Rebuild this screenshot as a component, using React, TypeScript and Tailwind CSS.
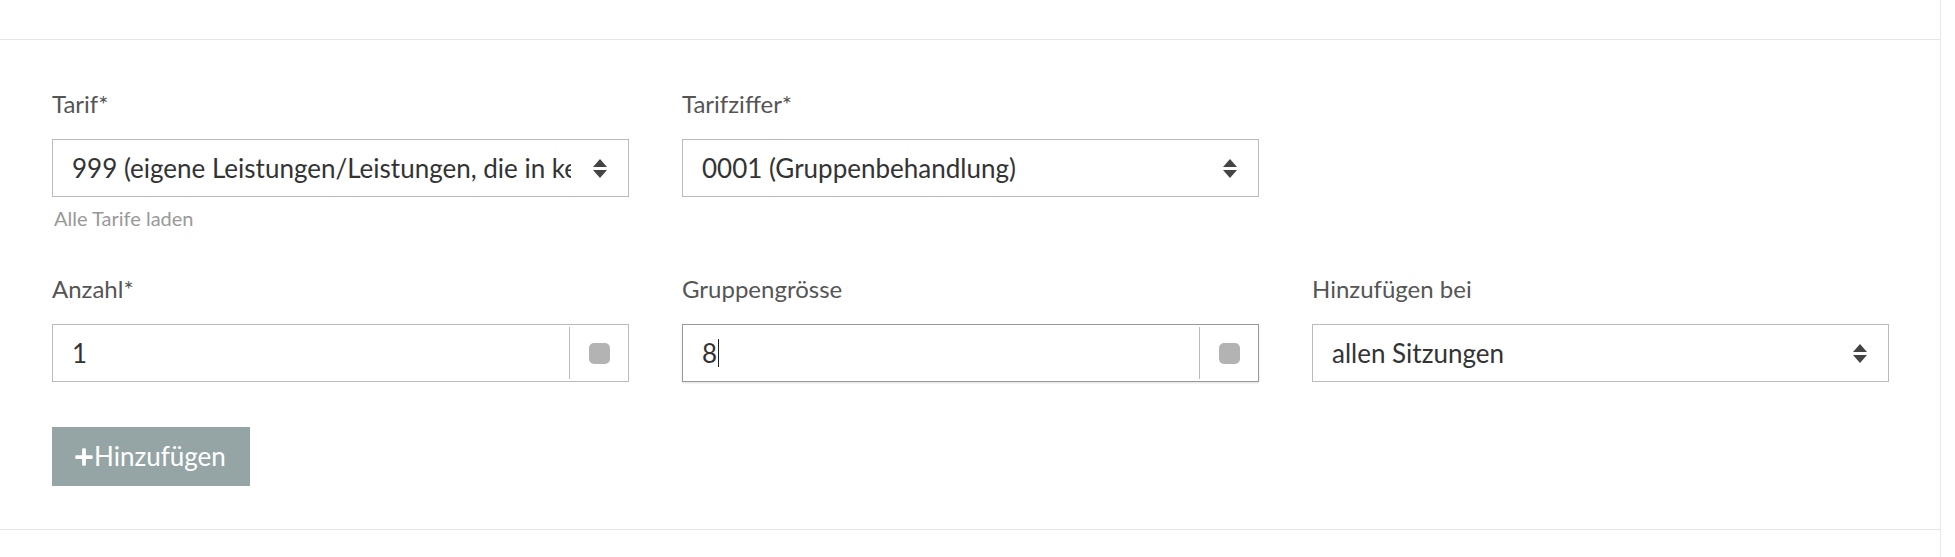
import React from 'react';
import { FaPlus } from 'react-icons/fa';

const font = { fontFamily: 'Lato, "Noto Sans", sans-serif' };

const SelectArrows: React.FC = () => (
    <svg width="14" height="19" viewBox="0 0 14 19" className="shrink-0">
        <path d="M7 0 L14 8 L0 8 Z" fill="#444" />
        <path d="M0 11 L14 11 L7 19 Z" fill="#444" />
    </svg>
);

const FakeSelect: React.FC<{ value: string }> = ({ value }) => (
    <div className="flex h-[58px] w-full items-center border border-[#bbbbbb] bg-white pl-[19px] pr-[21px]">
        <div className="mr-[22px] min-w-0 flex-1 overflow-hidden whitespace-nowrap text-[26px] text-[#333]">
            {value}
        </div>
        <SelectArrows />
    </div>
);

const NumberInput: React.FC<{ value: string; focused?: boolean }> = ({ value, focused }) => (
    <div
        className={
            'flex h-[58px] w-full border bg-white ' +
            (focused ? 'border-[#999999] shadow-[0_1px_2px_rgba(0,0,0,0.12)]' : 'border-[#bbbbbb]')
        }
    >
        <div className="flex flex-1 items-center pl-[19px] text-[26px] text-[#333]">
            <span>{value}</span>
            {focused && <span className="ml-px h-[28px] w-px bg-[#222]" />}
        </div>
        <div className="my-[2px] flex w-[59px] items-center justify-center border-l border-[#bbbbbb]">
            <span className="h-[21px] w-[21px] rounded-[5px] bg-[#b3b3b3]" />
        </div>
    </div>
);

const Label: React.FC<{ children: React.ReactNode }> = ({ children }) => (
    <div className="mb-[21px] h-[28px] text-[24px] leading-[28px] text-[#555]">{children}</div>
);

const App: React.FC = () => {
    return (
        <div className="min-h-screen bg-white" style={font}>
            <div className="min-h-[557px] w-[1941px] border-r border-[#e8e8e8]">
                <div className="h-[40px] border-b border-[#e5e5e5]" />
                <div className="border-b border-[#e5e5e5] pb-[43px] pl-[52px] pt-[50px]">
                    <div className="grid grid-cols-[577px_577px_577px] gap-x-[53px]">
                        <div>
                            <Label>Tarif*</Label>
                            <FakeSelect value="999 (eigene Leistungen/Leistungen, die in keinem Tarif enthalten sind)" />
                            <div className="mt-[9px] h-[24px] pl-[2px] text-[20px] leading-[24px] text-[#999]">
                                Alle Tarife laden
                            </div>
                        </div>
                        <div>
                            <Label>Tarifziffer*</Label>
                            <FakeSelect value="0001 (Gruppenbehandlung)" />
                        </div>
                        <div />

                        <div className="mt-[45px]">
                            <Label>Anzahl*</Label>
                            <NumberInput value="1" />
                        </div>
                        <div className="mt-[45px]">
                            <Label>Gruppengrösse</Label>
                            <NumberInput value="8" focused />
                        </div>
                        <div className="mt-[45px]">
                            <Label>Hinzufügen bei</Label>
                            <FakeSelect value="allen Sitzungen" />
                        </div>
                    </div>
                    <button className="mt-[45px] flex h-[59px] w-[198px] items-center bg-[#95a5a6] pl-[22px] text-[26px] text-white">
                        <FaPlus className="h-[20px] w-[20px]" />
                        <span>Hinzufügen</span>
                    </button>
                </div>
            </div>
        </div>
    );
};

export default App;
